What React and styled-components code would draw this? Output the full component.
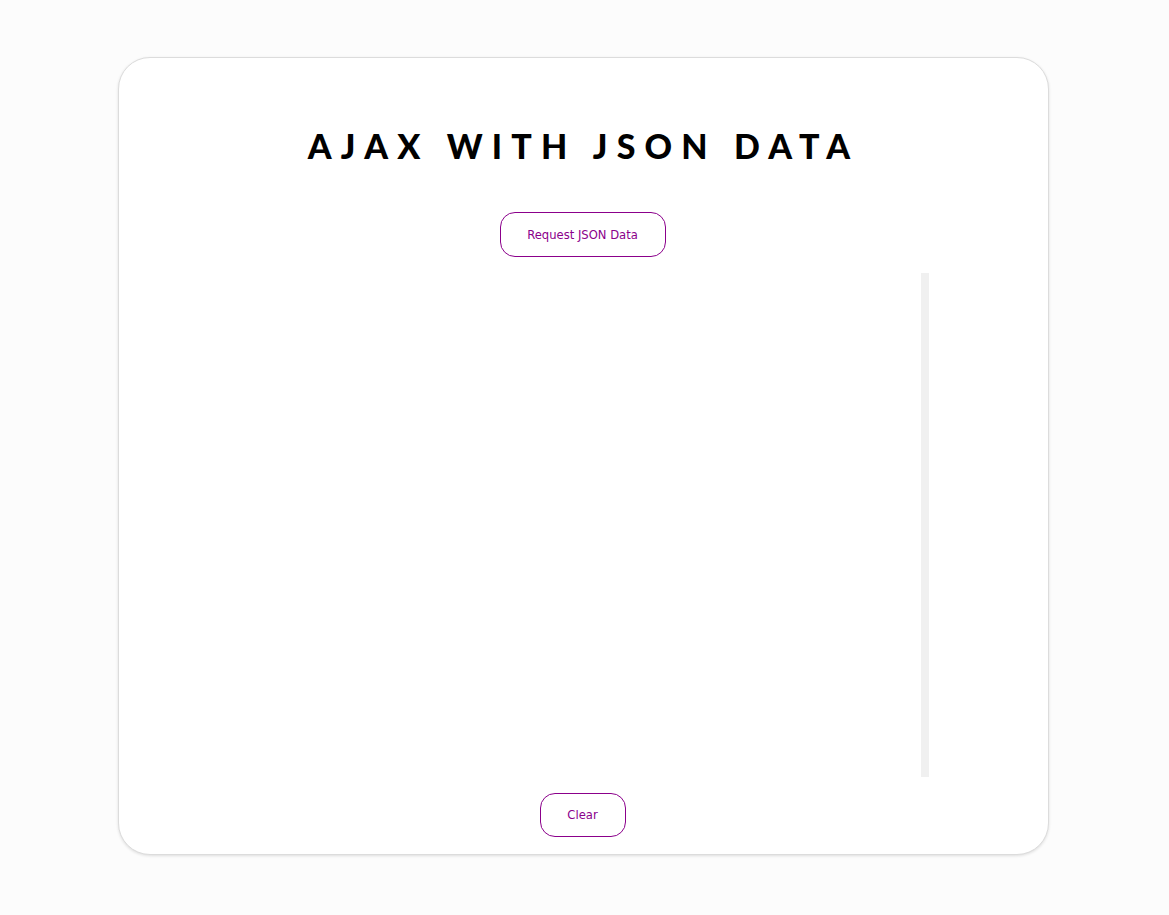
import React from 'react';
import styled, { createGlobalStyle } from 'styled-components';

const GlobalStyle = createGlobalStyle`
  html, body {
    margin: 0;
    padding: 0;
    background: #fcfcfc;
  }
`;

function App() {
  return (
    <>
      <GlobalStyle />
      <StyledPage>
        <StyledCard>
          <StyledTitle>AJAX WITH JSON DATA</StyledTitle>
          <StyledButton $width={166} $height={45} $top={46}>
            Request JSON Data
          </StyledButton>
          <StyledOutput />
          <StyledButton $width={86} $height={44} $top={16}>
            Clear
          </StyledButton>
        </StyledCard>
      </StyledPage>
    </>
  );
}

const StyledPage = styled.div`
  padding: 57px 0 60px 0;
  display: flex;
  justify-content: center;
`;

const StyledCard = styled.div`
  box-sizing: border-box;
  width: 931px;
  height: 798px;
  margin-left: -2px;
  background: #ffffff;
  border-radius: 32px;
  border: 1px solid #dcdcdc;
  box-shadow: 0 1px 3px rgba(0, 0, 0, 0.12);
  display: flex;
  flex-direction: column;
  align-items: center;
  padding: 68px 0 17px 0;
`;

const StyledTitle = styled.h1`
  margin: 0;
  font-family: Lato, 'Open Sans', sans-serif;
  font-weight: 900;
  font-size: 34px;
  line-height: 40px;
  letter-spacing: 0.27em;
  color: #000000;
`;

const StyledButton = styled.button`
  box-sizing: border-box;
  width: ${(p) => p.$width}px;
  height: ${(p) => p.$height}px;
  margin-top: ${(p) => p.$top}px;
  margin-right: 2px;
  background: #ffffff;
  border: 1px solid #8b008b;
  border-radius: 15px;
  color: #8b008b;
  font-family: 'DejaVu Sans', Verdana, sans-serif;
  font-size: 11.6px;
  cursor: pointer;
`;

const StyledOutput = styled.div`
  box-sizing: border-box;
  width: 691px;
  height: 504px;
  margin-top: 16px;
  border-right: 8px solid #f0f0f0;
  overflow-y: auto;
`;

export default App;
